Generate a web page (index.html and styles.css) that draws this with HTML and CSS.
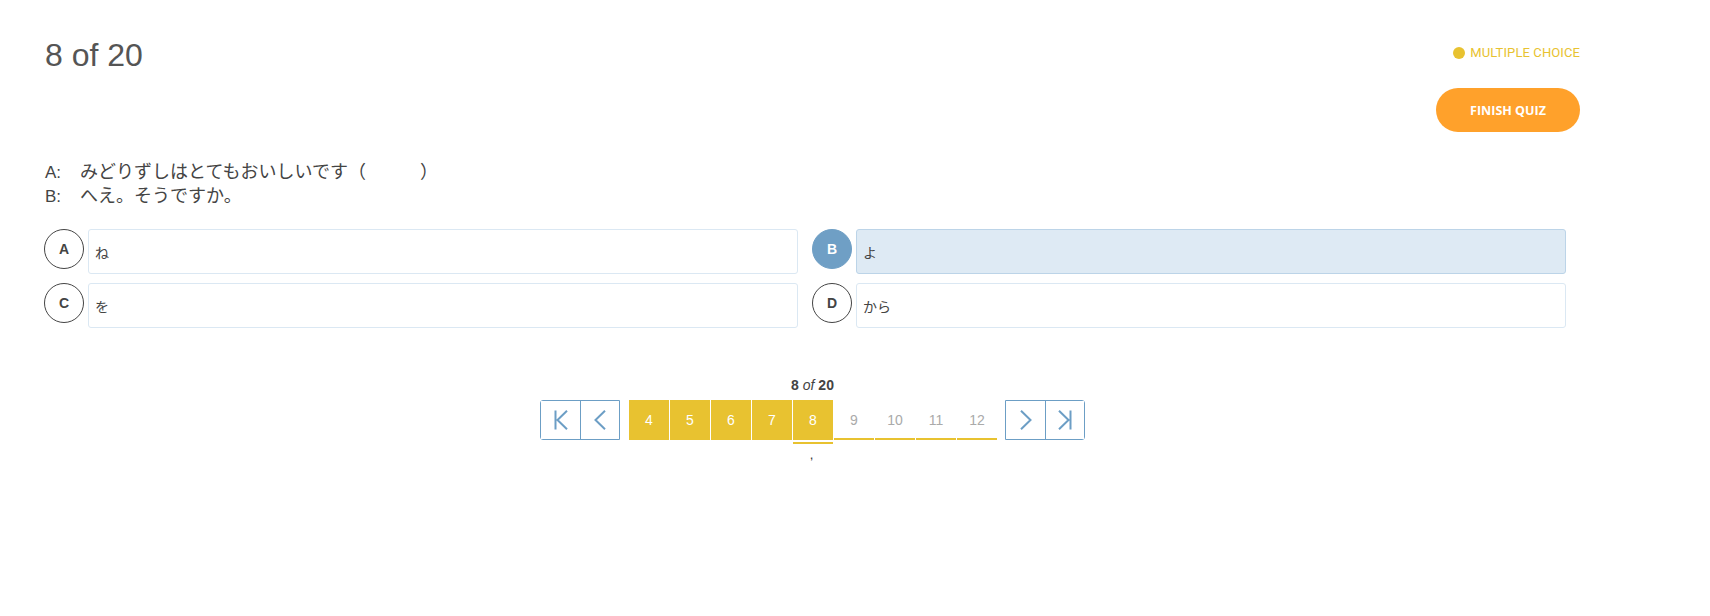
FILE: index.html
```html
<!DOCTYPE html>
<html lang="ja">
<head>
<meta charset="utf-8">
<title>Quiz</title>
<link rel="stylesheet" href="styles.css">
</head>
<body>
<div class="quiz">
  <header class="quiz-header">
    <h1 class="count">8 of 20</h1>
    <div class="header-right">
      <div class="qtype"><span class="dot"></span>MULTIPLE CHOICE</div>
      <button class="finish">FINISH QUIZ</button>
    </div>
  </header>

  <div class="question">
    <div class="line"><span class="speaker">A:</span><span class="jp">みどりずしはとてもおいしいです（　　　）</span></div>
    <div class="line"><span class="speaker">B:</span><span class="jp">へえ。そうですか。</span></div>
  </div>

  <div class="options">
    <div class="option"><span class="letter">A</span><div class="answer">ね</div></div>
    <div class="option selected"><span class="letter">B</span><div class="answer">よ</div></div>
    <div class="option"><span class="letter">C</span><div class="answer">を</div></div>
    <div class="option"><span class="letter">D</span><div class="answer">から</div></div>
  </div>

  <nav class="pager">
    <div class="pager-label"><b>8</b> <i>of</i> <b>20</b></div>
    <div class="pager-row">
      <div class="btn-group left">
        <button class="nav-btn" aria-label="First"><svg width="14" height="20" viewBox="0 0 14 20"><path d="M1.5 0.5V19.5M13 0.8L3.5 10L13 19.2" fill="none" stroke="#6c9ec5" stroke-width="2"/></svg></button>
        <button class="nav-btn" aria-label="Previous"><svg width="12" height="20" viewBox="0 0 12 20"><path d="M11 0.8L1.5 10L11 19.2" fill="none" stroke="#6c9ec5" stroke-width="2"/></svg></button>
      </div>
      <div class="pages">
        <span class="page done">4</span>
        <span class="page done">5</span>
        <span class="page done">6</span>
        <span class="page done">7</span>
        <span class="page done active">8</span>
        <span class="page">9</span>
        <span class="page">10</span>
        <span class="page">11</span>
        <span class="page">12</span>
      </div>
      <div class="btn-group right">
        <button class="nav-btn" aria-label="Next"><svg width="12" height="20" viewBox="0 0 12 20"><path d="M1 0.8L10.5 10L1 19.2" fill="none" stroke="#6c9ec5" stroke-width="2"/></svg></button>
        <button class="nav-btn" aria-label="Last"><svg width="14" height="20" viewBox="0 0 14 20"><path d="M12.5 0.5V19.5M1 0.8L10.5 10L1 19.2" fill="none" stroke="#6c9ec5" stroke-width="2"/></svg></button>
      </div>
    </div>
    <div class="pager-note">,</div>
  </nav>
</div>
</body>
</html>
```

FILE: styles.css
```css
* { box-sizing: border-box; }
html, body { margin: 0; padding: 0; background: #fff; }
body {
  font-family: "Liberation Sans", Arial, "Noto Sans CJK JP", sans-serif;
  color: #444;
}
.quiz {
  width: 1580px;
  padding: 0 0 0 45px;
}
.quiz-header {
  display: flex;
  justify-content: space-between;
  align-items: flex-start;
  padding-top: 36px;
}
.count {
  margin: 0;
  font-size: 32px;
  font-weight: 400;
  line-height: 38px;
  color: #555;
}
.header-right {
  display: flex;
  flex-direction: column;
  align-items: flex-end;
  padding-top: 9px;
}
.qtype {
  display: flex;
  align-items: center;
  font-family: Roboto, "Liberation Sans", sans-serif;
  font-size: 13px;
  line-height: 16px;
  color: #e8c230;
  letter-spacing: 0.1px;
}
.dot {
  width: 12px;
  height: 12px;
  border-radius: 50%;
  background: #e8c230;
  margin-right: 5px;
}
.finish {
  margin-top: 27px;
  width: 144px;
  height: 44px;
  border: none;
  border-radius: 22px;
  background: #ffa12b;
  color: #fff;
  font-family: "Open Sans", "Liberation Sans", sans-serif;
  font-weight: 700;
  font-size: 12.5px;
  padding: 0;
}
.question {
  margin-top: 26px;
  font-size: 18px;
  line-height: 24px;
  color: #444;
}
.line {
  display: flex;
  align-items: baseline;
  height: 24px;
}
.speaker {
  width: 35px;
  font-family: "Liberation Sans", Arial, sans-serif;
  font-size: 17px;
  line-height: 24px;
}
.jp {
  font-family: "Noto Sans CJK JP", sans-serif;
  font-size: 18px;
  line-height: 24px;
}
.options {
  margin-top: 23px;
  margin-left: -1px;
  width: 1522px;
  display: grid;
  grid-template-columns: 1fr 1fr;
  column-gap: 14px;
  row-gap: 9px;
}
.option {
  display: flex;
  align-items: flex-start;
}
.letter {
  flex: none;
  width: 40px;
  height: 40px;
  border-radius: 50%;
  border: 1px solid #444;
  display: flex;
  align-items: center;
  justify-content: center;
  font-size: 14px;
  font-weight: 700;
  color: #444;
  margin-right: 4px;
}
.answer {
  flex: 1;
  height: 45px;
  border: 1px solid #dbe8f3;
  border-radius: 3px;
  padding: 0 6px;
  display: flex;
  align-items: center;
  font-family: "Noto Sans CJK JP", sans-serif;
  font-size: 14px;
  color: #444;
}
.option.selected .letter {
  background: #6f9fc5;
  border-color: #6f9fc5;
  color: #fff;
}
.option.selected .answer {
  background: #deeaf4;
  border-color: #bcd4e8;
}
.pager {
  margin-top: 48px;
  display: flex;
  flex-direction: column;
  align-items: center;
}
.pager-label {
  font-size: 14px;
  line-height: 18px;
  color: #444;
  margin-bottom: 6px;
}
.pager-label i { font-weight: 400; }
.pager-row {
  display: flex;
  align-items: flex-start;
}
.btn-group {
  display: flex;
  border: 1px solid #6c9ec5;
  height: 40px;
}
.btn-group.left { border-radius: 3px 0 0 3px; margin-right: 9px; }
.btn-group.right { border-radius: 0 3px 3px 0; margin-left: 8px; }
.nav-btn {
  width: 39px;
  height: 38px;
  border: none;
  background: #fff;
  padding: 0;
  display: flex;
  align-items: center;
  justify-content: center;
}
.btn-group .nav-btn + .nav-btn { border-left: 1px solid #6c9ec5; }
.pages {
  display: flex;
  gap: 1px;
}
.page {
  width: 40px;
  height: 40px;
  display: flex;
  align-items: center;
  justify-content: center;
  font-size: 14px;
  color: #aaa;
  border-bottom: 2px solid #e8c230;
  padding-top: 1px;
}
.page.done {
  background: #e8c230;
  color: #fff;
}
.page.active {
  box-shadow: 0 2px 0 #fff, 0 4px 0 #e8c230;
}
.pager-note {
  margin-top: 7px;
  font-size: 13px;
  line-height: 16px;
  color: #333;
  padding-right: 2px;
}
```
